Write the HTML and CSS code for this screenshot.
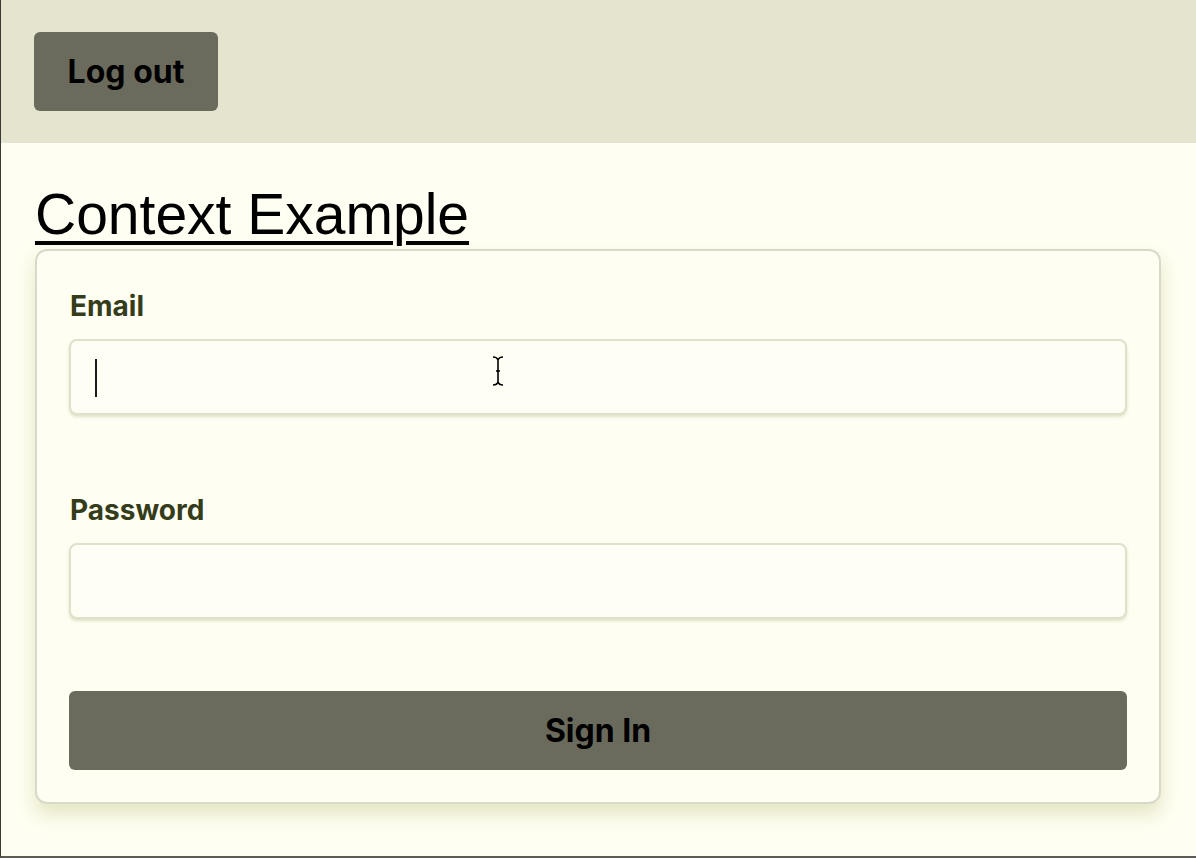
FILE: index.html
```html
<!DOCTYPE html>
<html lang="en">
<head>
<meta charset="utf-8">
<title>Context Example</title>
<link rel="stylesheet" href="styles.css">
</head>
<body>
<div class="page">
  <header class="topbar">
    <button class="btn btn-logout" type="button">Log out</button>
  </header>
  <main class="content">
    <h1 class="title"><a href="#">Context Example</a></h1>
    <form class="card">
      <div class="field">
        <label class="label" for="email">Email</label>
        <div class="input"><span class="caret"></span></div>
      </div>
      <div class="field">
        <label class="label" for="pw">Password</label>
        <div class="input"></div>
      </div>
      <button class="btn btn-signin" type="button">Sign In</button>
      <svg class="ibeam" width="14" height="32" viewBox="0 0 14 32" aria-hidden="true">
        <path d="M2 2 Q6 2 7 5 Q8 2 12 2 M7 5 V27 M2 30 Q6 30 7 27 Q8 30 12 30 M5 16 H9" fill="none" stroke="#000" stroke-width="1.6"/>
      </svg>
    </form>
  </main>
</div>
</body>
</html>
```

FILE: styles.css
```css
* { box-sizing: border-box; }
html, body { margin: 0; padding: 0; }
body {
  background: #fefef2;
  font-family: Inter, "Liberation Sans", Arial, sans-serif;
  color: #000;
}
.page {
  height: 858px;
  border-bottom: 2px solid #5c5c52;
  border-left: 1px solid #3a3a34;
  overflow: hidden;
}
.topbar {
  background: #e4e4cf;
  height: 143px;
  padding: 32px 0 0 33px;
}
.btn {
  font-family: Inter, "Liberation Sans", Arial, sans-serif;
  font-weight: 700;
  font-size: 32px;
  color: #000;
  background: #6b6b5d;
  border: none;
  border-radius: 6px;
  cursor: pointer;
}
.btn-logout {
  width: 184px;
  height: 79px;
  padding: 0;
}
.content {
  padding: 0 33px 0 34px;
}
.title {
  margin: 36px 0 0 0;
  font-family: "Liberation Sans", Arial, sans-serif;
  font-weight: 400;
  font-size: 57px;
  line-height: 70px;
  height: 70px;
}
.title a {
  color: #000;
  text-decoration: underline;
  text-decoration-thickness: 4px;
  text-underline-offset: 7px;
}
.card {
  position: relative;
  width: 1126px;
  border: 2px solid #d9d9c9;
  border-radius: 12px;
  background: #fefef2;
  box-shadow: 0 10px 18px rgba(200, 200, 140, 0.45);
  padding: 38px 32px 32px 32px;
  display: flex;
  flex-direction: column;
}
.field {
  display: flex;
  flex-direction: column;
}
.field + .field { margin-top: 78px; }
.label {
  font-weight: 700;
  font-size: 28px;
  line-height: 34px;
  color: #353c1b;
  margin-bottom: 16px;
  margin-left: 1px;
}
.input {
  height: 76px;
  width: 1058px;
  border: 2px solid #e0e0cc;
  border-radius: 8px;
  background: #fefef4;
  box-shadow: 0 2px 3px rgba(200, 200, 160, 0.5);
  display: flex;
  align-items: center;
  padding-left: 24px;
}
.caret {
  width: 2px;
  height: 38px;
  background: #1a1a1a;
  margin-top: 2px;
}
.btn-signin {
  width: 1058px;
  height: 79px;
  margin-top: 72px;
}
.ibeam {
  position: absolute;
  left: 454px;
  top: 104px;
}
```
